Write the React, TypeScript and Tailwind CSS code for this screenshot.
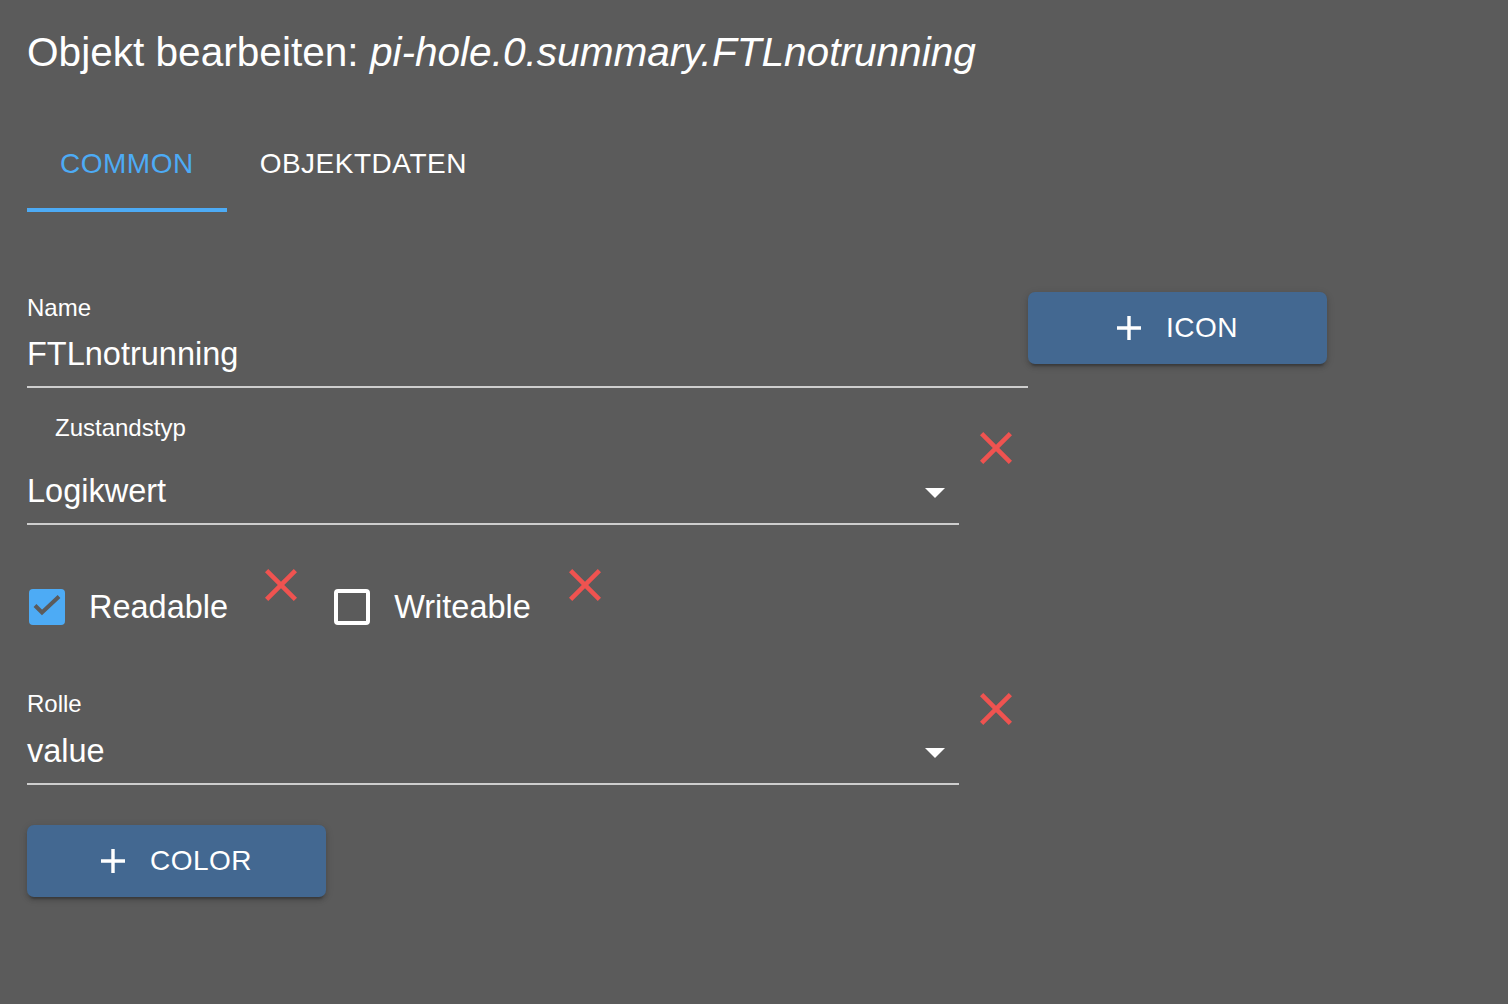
import { useState } from "react";

const RemoveIcon = () => (
  <svg width="32" height="32" viewBox="5 5 14 14" className="shrink-0">
    <path
      fill="#ef5350"
      d="M19 6.41L17.59 5 12 10.59 6.41 5 5 6.41 10.59 12 5 17.59 6.41 19 12 13.41 17.59 19 19 17.59 13.41 12z"
    />
  </svg>
);

const PlusIcon = () => (
  <svg width="24" height="24" viewBox="5 5 14 14" className="shrink-0">
    <path fill="#ffffff" d="M19 13h-6v6h-2v-6H5v-2h6V5h2v6h6v2z" />
  </svg>
);

const DropArrow = () => (
  <svg width="20" height="10" viewBox="0 0 20 10" className="shrink-0 mr-[14px] mt-[3px]">
    <polygon points="0,0 20,0 10,10" fill="#ffffff" />
  </svg>
);

const ActionButton = ({ label }: { label: string }) => (
  <button className="flex items-center justify-center gap-[25px] w-[299px] h-[72px] rounded-[7px] bg-[#436891] text-white text-[28px] tracking-[0.5px] leading-none shadow-[0_5px_2px_-3px_rgba(0,0,0,0.2),0_3px_4px_0_rgba(0,0,0,0.14),0_2px_9px_0_rgba(0,0,0,0.12)]">
    <PlusIcon />
    <span>{label}</span>
  </button>
);

const Checkbox = ({ checked, label }: { checked: boolean; label: string }) => (
  <div className="flex items-center h-[36px] mt-[20px]">
    {checked ? (
      <div className="w-[36px] h-[36px] rounded-[4px] bg-[#4dabf5] ml-[2px]">
        <svg width="36" height="36" viewBox="0 0 36 36">
          <polyline points="6,16.5 13,23.5 30,7.5" fill="none" stroke="#5b5b5b" strokeWidth="4" />
        </svg>
      </div>
    ) : (
      <div className="w-[36px] h-[36px] rounded-[4px] border-[4px] border-white" />
    )}
    <span className="ml-[24px] text-[32.5px] leading-[32px]">{label}</span>
  </div>
);

const SelectField = ({ label, value, indent }: { label: string; value: string; indent?: boolean }) => (
  <div className="w-[932px] flex flex-col">
    <div className={`text-[24px] leading-[24px] ${indent ? "pl-[28px]" : ""}`}>{label}</div>
    <div
      className={`flex items-center justify-between pb-[16px] border-b-2 border-[#cecece] ${
        indent ? "mt-[35px]" : "mt-[19px]"
      }`}
    >
      <span className="text-[32.5px] leading-[32px]">{value}</span>
      <DropArrow />
    </div>
  </div>
);

const App = () => {
  const [tab, setTab] = useState<number>(0);

  return (
    <div className="min-h-screen bg-[#5b5b5b] text-white px-[27px] pt-[32px] font-['Liberation_Sans',Arial,sans-serif]">
      {/* Title */}
      <h1 className="text-[40.6px] leading-[40px] whitespace-nowrap">
        Objekt bearbeiten: <span className="italic">pi-hole.0.summary.FTLnotrunning</span>
      </h1>

      {/* Tabs */}
      <div className="flex mt-[48px] h-[92px]">
        {["COMMON", "OBJEKTDATEN"].map((t, i) => (
          <button key={t} onClick={() => setTab(i)} className="flex flex-col h-full">
            <div
              className={`flex-1 flex items-center px-[33px] text-[28px] leading-[28px] tracking-[0.5px] ${
                tab === i ? "text-[#4dabf5]" : "text-white"
              }`}
            >
              {t}
            </div>
            <div className={`h-[4px] w-full ${tab === i ? "bg-[#4dabf5]" : ""}`} />
          </button>
        ))}
      </div>

      {/* Name + Icon */}
      <div className="flex items-start mt-[80px]">
        <div className="w-[1001px] flex flex-col pt-[4px]">
          <div className="text-[24px] leading-[24px]">Name</div>
          <div className="mt-[18px] text-[32.5px] leading-[32px] pb-[16px] border-b-2 border-[#cecece]">
            FTLnotrunning
          </div>
        </div>
        <ActionButton label="ICON" />
      </div>

      {/* Zustandstyp */}
      <div className="flex items-start mt-[28px]">
        <SelectField label="Zustandstyp" value="Logikwert" indent />
        <div className="ml-[21px] mt-[16px]">
          <RemoveIcon />
        </div>
      </div>

      {/* Readable / Writeable */}
      <div className="flex items-start mt-[44px]">
        <Checkbox checked label="Readable" />
        <div className="ml-[37px]">
          <RemoveIcon />
        </div>
        <div className="ml-[37px]">
          <Checkbox checked={false} label="Writeable" />
        </div>
        <div className="ml-[38px]">
          <RemoveIcon />
        </div>
      </div>

      {/* Rolle */}
      <div className="flex items-start mt-[67px]">
        <SelectField label="Rolle" value="value" />
        <div className="ml-[21px] mt-[1px]">
          <RemoveIcon />
        </div>
      </div>

      {/* Color */}
      <div className="mt-[40px] pb-[100px]">
        <ActionButton label="COLOR" />
      </div>
    </div>
  );
};

export default App;
